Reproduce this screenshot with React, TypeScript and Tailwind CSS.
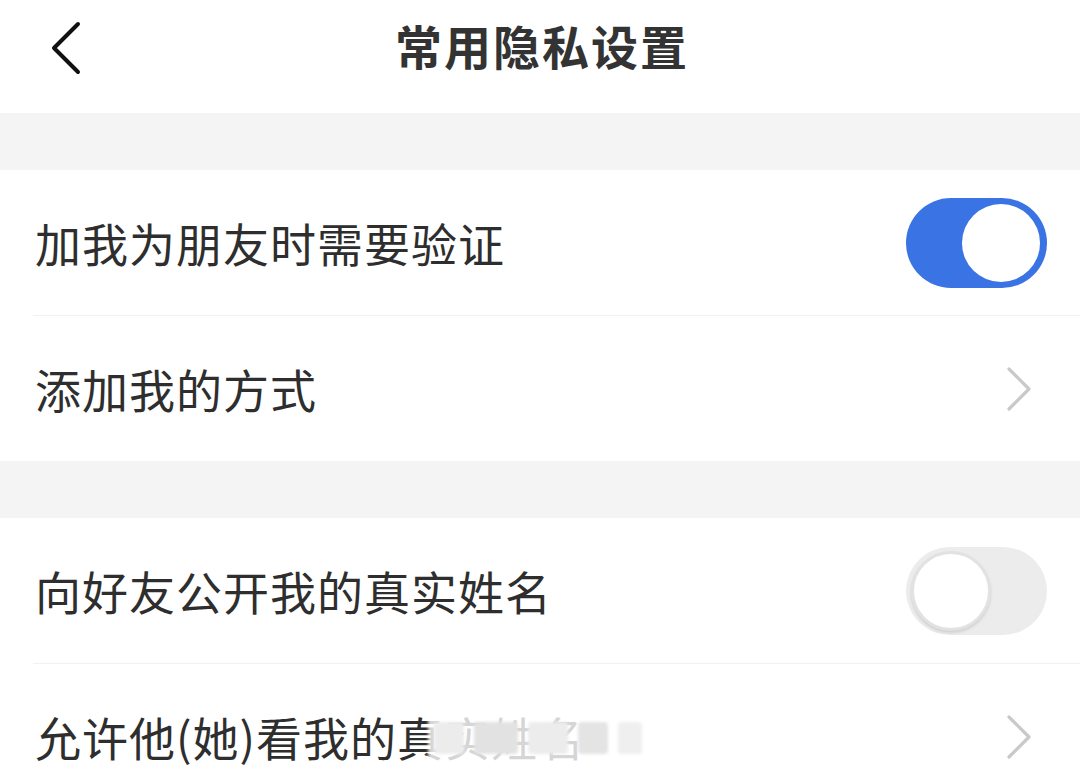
import React from "react";

const font = { fontFamily: '"Noto Sans CJK SC", "Noto Sans", sans-serif' };

function Toggle({ on }: { on: boolean }) {
  if (on) {
    return (
      <div className="w-[141px] h-[90px] rounded-full bg-[#3a73e4] flex items-center justify-end pr-[7px]">
        <div className="w-[78px] h-[78px] rounded-full bg-white" />
      </div>
    );
  }
  return (
    <div className="w-[141px] h-[88px] rounded-full bg-[#ececec] flex items-center pl-[5px]">
      <div className="w-[80px] h-[80px] rounded-full bg-white border-[3px] border-[#e2e2e2] shadow-[0_2px_3px_rgba(0,0,0,0.12)]" />
    </div>
  );
}

function Chevron() {
  return (
    <svg width="30" height="46" viewBox="0 0 30 46" className="mr-[12px]">
      <path d="M4 3 L24 23 L4 43" fill="none" stroke="#c9c9c9" strokeWidth="3.2" strokeLinecap="round" strokeLinejoin="round" />
    </svg>
  );
}

function Row({ label, right, divider }: { label: string; right: React.ReactNode; divider?: boolean }) {
  return (
    <div className="bg-white">
      <div className="h-[145px] flex items-center justify-between pl-[35px] pr-[33px]">
        <span className="text-[46px] text-[#2e2e2e] tracking-[1px]">{label}</span>
        {right}
      </div>
      {divider && <div className="ml-[33px] h-px bg-[#f1f1f1]" />}
    </div>
  );
}

export default function App() {
  return (
    <div className="w-[1080px] h-[774px] overflow-hidden bg-white relative" style={font}>
      <header className="h-[113px] flex items-center justify-center relative">
        <svg width="40" height="56" viewBox="0 0 40 56" className="absolute left-[45px] top-[20px]">
          <path d="M33 4 L9 28 L33 52" fill="none" stroke="#111" strokeWidth="4" strokeLinecap="round" strokeLinejoin="round" />
        </svg>
        <h1 className="text-[47px] font-bold text-[#333] tracking-[2px] -mt-[22px] pl-[4px]">常用隐私设置</h1>
      </header>
      <div className="h-[57px] bg-[#f4f4f4]" />
      <Row label="加我为朋友时需要验证" right={<Toggle on />} divider />
      <Row label="添加我的方式" right={<Chevron />} />
      <div className="h-[57px] bg-[#f4f4f4]" />
      <Row label="向好友公开我的真实姓名" right={<Toggle on={false} />} divider />
      <Row label="允许他(她)看我的真实姓名" right={<Chevron />} />
      <div className="absolute left-[428px] top-[712px] w-[222px] h-[52px] bg-white/80 blur-[1.5px] flex items-center gap-[10px] px-[6px]">
        <div className="w-[30px] h-[32px] bg-[#ececec] rounded" />
        <div className="w-[44px] h-[32px] bg-[#e2e2e2] rounded" />
        <div className="w-[40px] h-[32px] bg-[#ececec] rounded" />
        <div className="w-[30px] h-[32px] bg-[#e4e4e4] rounded" />
        <div className="w-[24px] h-[32px] bg-[#efefef] rounded" />
      </div>
    </div>
  );
}
